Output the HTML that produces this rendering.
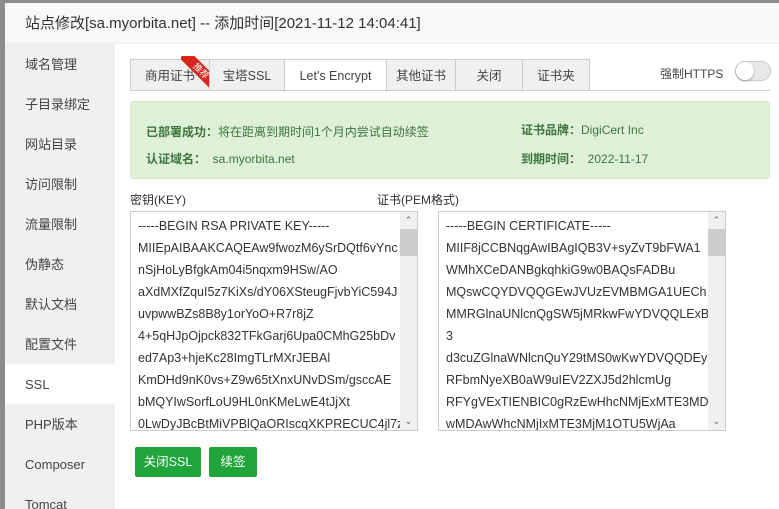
<!DOCTYPE html>
<html><head><meta charset="utf-8"><style>
*{margin:0;padding:0;box-sizing:border-box}
html,body{width:779px;height:509px;overflow:hidden}
body{background:#8c8c8c;font-family:"Liberation Sans","Noto Sans CJK SC",sans-serif;color:#333;position:relative}
.modal{position:absolute;left:5px;top:3px;width:780px;height:506px;background:#fff;overflow:hidden}
.title{height:41px;background:#f8f8f8;border-bottom:1px solid #eee;font-size:15px;line-height:42px;padding-left:20px;color:#333}
.side{position:absolute;left:0;top:41px;width:110px;height:480px;background:#f0f0f0}
.side div{height:40px;line-height:41px;padding-left:20px;font-size:13px;color:#444}
.side .on{background:#fff}
.ab{position:absolute;font-size:12px}
.tab{position:absolute;top:56px;height:32px;border:1px solid #ccc;border-bottom:none;background:#f0f0f0;font-size:12.5px;line-height:33px;text-align:center;color:#444}
.tab.on{background:#fff;height:33px}
.line{position:absolute;left:125px;top:87px;width:640px;border-top:1px solid #ccc}
.ok{position:absolute;left:125px;top:98px;width:640px;height:78px;background:#dff0d8;border:1px solid #d6e9c6;border-radius:3px;color:#3c763d;font-size:12px}
.ok b{font-weight:bold}
.ta{position:absolute;top:208px;width:288px;height:220px;border:1px solid #ccc;overflow:hidden;font-size:12.5px;line-height:22px;padding:3px 0 0 7px;color:#333}
.sb{position:absolute;right:0;top:0;width:17px;height:100%;background:#f0f0f0}
.sb .th{position:absolute;top:17px;left:0;width:17px;height:27px;background:#cdcdcd}
.sb .u,.sb .d{position:absolute;left:0;width:17px;text-align:center;font-size:9px;color:#606060;line-height:17px}
.btn{position:absolute;top:444px;height:30px;background:#20a53a;color:#fff;font-size:12.5px;line-height:30px;text-align:center;border-radius:2px}
</style></head><body>
<div class="modal">
<div class="title">站点修改[sa.myorbita.net] -- 添加时间[2021-11-12 14:04:41]</div>
<div class="side">
<div>域名管理</div><div>子目录绑定</div><div>网站目录</div><div>访问限制</div><div>流量限制</div><div>伪静态</div><div>默认文档</div><div>配置文件</div><div class="on">SSL</div><div>PHP版本</div><div>Composer</div><div>Tomcat</div>
</div>
<div class="tab" style="left:125px;width:80px">商用证书</div>
<div style="position:absolute;left:176px;top:53px;width:30px;height:35px;overflow:hidden">
<div style="position:absolute;left:-4px;top:9px;width:48px;height:12px;background:#d9261c;color:#fff;font-size:9px;line-height:12px;text-align:center;transform:rotate(45deg)">推荐</div></div>
<div class="tab" style="left:204px;width:76px">宝塔SSL</div>
<div class="tab on" style="left:279px;width:103px">Let's Encrypt</div>
<div class="tab" style="left:381px;width:70px">其他证书</div>
<div class="tab" style="left:450px;width:68px">关闭</div>
<div class="tab" style="left:517px;width:68px">证书夹</div>
<div class="line"></div>
<div class="ab" style="left:655px;top:62px;color:#444">强制HTTPS</div>
<div style="position:absolute;left:730px;top:58px;width:36px;height:20px;border-radius:10px;background:#e8e8e8;border:1px solid #ccc"><div style="position:absolute;left:0;top:0;width:18px;height:18px;border-radius:50%;background:#fff;box-shadow:0 1px 2px rgba(0,0,0,.3)"></div></div>
<div class="ok">
<div class="ab" style="left:15px;top:21px"><b>已部署成功：</b>将在距离到期时间1个月内尝试自动续签</div>
<div class="ab" style="left:15px;top:48px"><b>认证域名：</b>&nbsp; sa.myorbita.net</div>
<div class="ab" style="left:390px;top:19px"><b>证书品牌：</b>DigiCert Inc</div>
<div class="ab" style="left:390px;top:48px"><b>到期时间：</b>&nbsp; 2022-11-17</div>
</div>
<div class="ab" style="left:125px;top:188px">密钥(KEY)</div>
<div class="ab" style="left:372px;top:188px">证书(PEM格式)</div>
<div class="ta" style="left:125px">-----BEGIN RSA PRIVATE KEY-----<br>MIIEpAIBAAKCAQEAw9fwozM6ySrDQtf6vYnc<br>nSjHoLyBfgkAm04i5nqxm9HSw/AO<br>aXdMXfZquI5z7KiXs/dY06XSteugFjvbYiC594J<br>uvpwwBZs8B8y1orYoO+R7r8jZ<br>4+5qHJpOjpck832TFkGarj6Upa0CMhG25bDv<br>ed7Ap3+hjeKc28ImgTLrMXrJEBAl<br>KmDHd9nK0vs+Z9w65tXnxUNvDSm/gsccAE<br>bMQYIwSorfLoU9HL0nKMeLwE4tJjXt<br>0LwDyJBcBtMiVPBlQaORIscqXKPRECUC4jl7z
<div class="sb"><div class="u" style="top:0">&#8963;</div><div class="th"></div><div class="d" style="bottom:0">&#8964;</div></div></div>
<div class="ta" style="left:433px">-----BEGIN CERTIFICATE-----<br>MIIF8jCCBNqgAwIBAgIQB3V+syZvT9bFWA1<br>WMhXCeDANBgkqhkiG9w0BAQsFADBu<br>MQswCQYDVQQGEwJVUzEVMBMGA1UECh<br>MMRGlnaUNlcnQgSW5jMRkwFwYDVQQLExB<br>3<br>d3cuZGlnaWNlcnQuY29tMS0wKwYDVQQDEy<br>RFbmNyeXB0aW9uIEV2ZXJ5d2hlcmUg<br>RFYgVExTIENBIC0gRzEwHhcNMjExMTE3MDA<br>wMDAwWhcNMjIxMTE3MjM1OTU5WjAa
<div class="sb"><div class="u" style="top:0">&#8963;</div><div class="th"></div><div class="d" style="bottom:0">&#8964;</div></div></div>
<div class="btn" style="left:130px;width:66px">关闭SSL</div>
<div class="btn" style="left:204px;width:48px">续签</div>
</div>
</body></html>
